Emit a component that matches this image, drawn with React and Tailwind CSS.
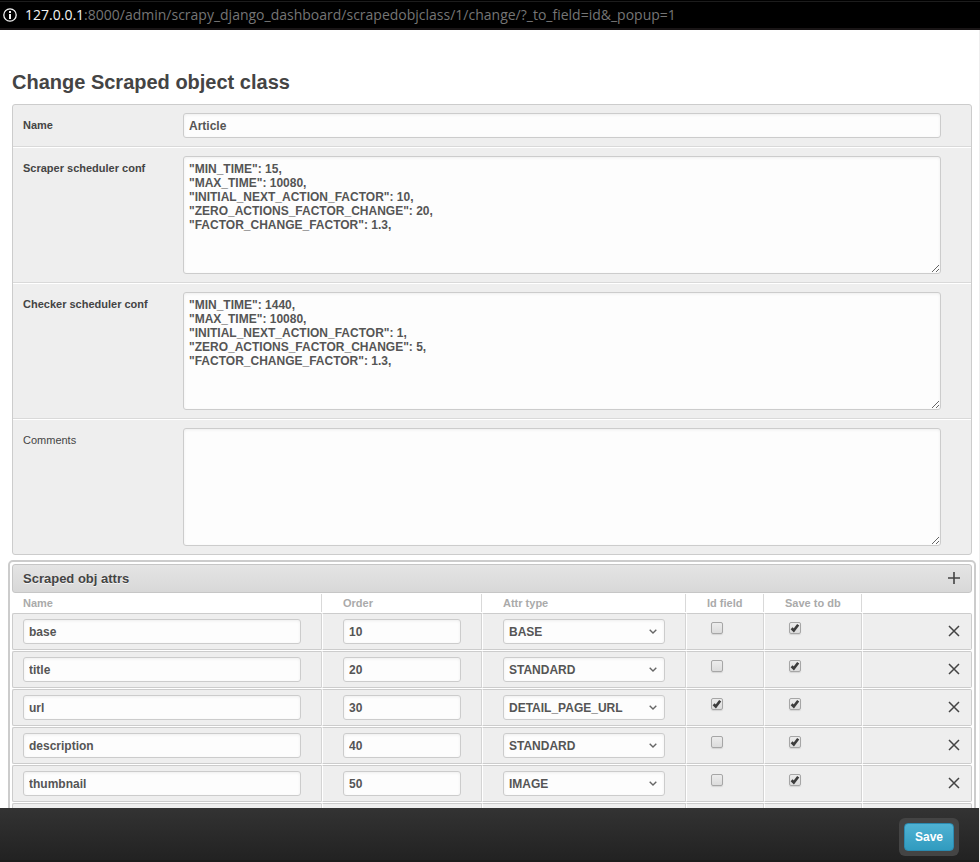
import React from 'react'

const schedulerFields = [
  {
    id: 'scraper-conf',
    label: 'Scraper scheduler conf',
    value:
      '"MIN_TIME": 15,\n"MAX_TIME": 10080,\n"INITIAL_NEXT_ACTION_FACTOR": 10,\n"ZERO_ACTIONS_FACTOR_CHANGE": 20,\n"FACTOR_CHANGE_FACTOR": 1.3,',
    required: true,
  },
  {
    id: 'checker-conf',
    label: 'Checker scheduler conf',
    value:
      '"MIN_TIME": 1440,\n"MAX_TIME": 10080,\n"INITIAL_NEXT_ACTION_FACTOR": 1,\n"ZERO_ACTIONS_FACTOR_CHANGE": 5,\n"FACTOR_CHANGE_FACTOR": 1.3,',
    required: true,
  },
  { id: 'comments', label: 'Comments', value: '', required: false },
]

const attrs = [
  { name: 'base', order: '10', type: 'BASE', idField: false, save: true },
  { name: 'title', order: '20', type: 'STANDARD', idField: false, save: true },
  { name: 'url', order: '30', type: 'DETAIL_PAGE_URL', idField: true, save: true },
  { name: 'description', order: '40', type: 'STANDARD', idField: false, save: true },
  { name: 'thumbnail', order: '50', type: 'IMAGE', idField: false, save: true },
  { name: '', order: '', type: '', idField: false, save: false },
]

const control =
  'block w-full rounded-[3px] border border-[#ccc] bg-[#fdfdfd] px-[5px] text-xs font-bold text-[#555] shadow-[inset_0_1px_3px_#eee] outline-none focus:border-[#999]'

const cell = 'border-y border-y-[#ccc] border-r border-r-[#d4d4d4] border-l border-l-white bg-[#eee] px-5 py-[5px] align-top'

function Check({ label, checked }) {
  return (
    <span className="relative ml-1 mt-[3px] block size-3">
      <input
        type="checkbox"
        aria-label={label}
        defaultChecked={checked}
        className="peer block size-3 appearance-none rounded-[2px] border border-[#a6a6a6] bg-linear-to-b from-[#ececec] to-[#dcdcdc] shadow-[0_1px_1px_#d4d4d4]"
      />
      <svg
        viewBox="0 0 12 12"
        className="pointer-events-none absolute inset-0 hidden size-3 peer-checked:block"
        aria-hidden="true"
      >
        <path d="M2.6 6.2 4.8 8.5 9.2 2.8" fill="none" stroke="#3c3c3c" strokeWidth="2.7" />
      </svg>
    </span>
  )
}

function AttrRow({ attr }) {
  return (
    <tr>
      <td className="rounded-l-[2px] border-y border-r border-l border-y-[#ccc] border-r-[#d4d4d4] border-l-[#ccc] bg-[#eee] py-[5px] pr-5 pl-[10px] align-top">
        <input type="text" aria-label="Name" defaultValue={attr.name} className={`${control} h-[25px]`} />
      </td>
      <td className={cell}>
        <input type="text" aria-label="Order" defaultValue={attr.order} className={`${control} h-[25px]`} />
      </td>
      <td className={cell}>
        <div className="relative">
          <select
            aria-label="Attr type"
            defaultValue={attr.type}
            className={`${control} h-[25px] appearance-none`}
          >
            <option>{attr.type}</option>
          </select>
          <svg
            viewBox="0 0 8 5"
            className="pointer-events-none absolute top-[10px] right-2 h-[5px] w-2"
            aria-hidden="true"
          >
            <path d="M.7.7 4 3.9 7.3.7" fill="none" stroke="#666" strokeWidth="1.4" />
          </svg>
        </div>
      </td>
      <td className={cell}>
        <Check label="Id field" checked={attr.idField} />
      </td>
      <td className={cell}>
        <Check label="Save to db" checked={attr.save} />
      </td>
      <td className="rounded-r-[2px] border-y border-r border-l border-y-[#ccc] border-r-[#ccc] border-l-white bg-[#eee] pr-[11px] align-middle">
        <button type="button" aria-label="Remove attribute" className="mb-px ml-auto block size-3">
          <svg viewBox="0 0 12 12" className="size-3" aria-hidden="true">
            <path d="M1 1 11 11M11 1 1 11" fill="none" stroke="#444" strokeWidth="1.5" />
          </svg>
        </button>
      </td>
    </tr>
  )
}

export default function App() {
  return (
    <div className="flex h-screen flex-col bg-white font-['Liberation_Sans',Arial,sans-serif] text-[#444]">
      <div className="flex h-[30px] shrink-0 items-center border-t border-b-2 border-t-black border-b-[#191516] bg-black pl-[3px] font-['Open_Sans',sans-serif] text-sm text-[#757575] shadow-[inset_0_1px_0_#1c1c1c]">
        <svg viewBox="0 0 14 14" className="size-[14px] shrink-0" aria-hidden="true">
          <circle cx="7" cy="7" r="6.2" fill="none" stroke="#f4f4f4" strokeWidth="1.3" />
          <path d="M7 3v2M7 6v5" stroke="#f4f4f4" strokeWidth="2" />
        </svg>
        <span className="ml-2 whitespace-nowrap">
          <span className="text-[#f4f4f4]">127.0.0.1</span>
          :8000/admin/scrapy_django_dashboard/scrapedobjclass/1/change/?_to_field=id&amp;_popup=1
        </span>
      </div>

      <form className="flex min-h-0 flex-1 flex-col border-r border-[#eee]" onSubmit={(e) => e.preventDefault()}>
        <main className="min-h-0 flex-1 overflow-y-auto pt-10 pr-[3px] pl-2 [scrollbar-width:none]">
          <h1 className="mb-[10px] ml-1 text-xl leading-6 font-bold">Change Scraped object class</h1>

          <div className="mr-1 ml-1 rounded-[3px] border border-[#ccc] bg-[#eee]">
            <div className="flex border-b border-[#d9d9d9] py-2 pr-[30px] pl-[10px]">
              <label htmlFor="name" className="w-40 shrink-0 pt-[5px] text-[11px] leading-[14px] font-bold">
                Name
              </label>
              <input id="name" type="text" defaultValue="Article" className={`${control} h-[25px]`} />
            </div>
            {schedulerFields.map((f) => (
              <div
                key={f.id}
                className="flex border-t border-b border-t-white border-b-[#d9d9d9] py-2 pr-[30px] pl-[10px] last:border-b-0"
              >
                <label
                  htmlFor={f.id}
                  className={`w-40 shrink-0 pt-[5px] text-[11px] leading-[14px] ${f.required ? 'font-bold' : ''}`}
                >
                  {f.label}
                </label>
                <textarea
                  id={f.id}
                  defaultValue={f.value}
                  className={`${control} h-[118px] resize-y py-[5px] leading-[14px]`}
                />
              </div>
            ))}
          </div>

          <section className="mt-[5px] rounded-[5px] border-2 border-[#ccc] p-[2px]">
            <div className="flex h-[29px] items-center justify-between rounded-[3px] border border-[#c6c6c6] bg-linear-to-b from-[#e4e4e4] to-[#d8d8d8] pr-[11px] pl-[10px]">
              <h2 className="text-[13px] font-bold [text-shadow:0_1px_0_#f4f4f4]">Scraped obj attrs</h2>
              <button type="button" aria-label="Add attribute" className="mb-px size-3">
                <svg viewBox="0 0 12 12" className="size-3" aria-hidden="true">
                  <path d="M6 0v12M0 6h12" fill="none" stroke="#444" strokeWidth="1.6" />
                </svg>
              </button>
            </div>
            <table className="w-full table-fixed border-separate border-spacing-x-0 border-spacing-y-px">
              <thead>
                <tr className="h-[18px] text-left text-[11px] leading-[18px] text-[#aaa]">
                  <th className="border-r border-[#d9d9d9] py-0 pl-[11px]">Name</th>
                  <th className="w-[160px] border-r border-[#d9d9d9] py-0 pl-[21px]">Order</th>
                  <th className="w-[204px] border-r border-[#d9d9d9] py-0 pl-[21px]">Attr type</th>
                  <th className="w-[78px] border-r border-[#d9d9d9] py-0 pl-[21px]">Id field</th>
                  <th className="w-[98px] border-r border-[#d9d9d9] py-0 pl-[21px]">Save to db</th>
                  <td className="w-[110px] p-0" />
                </tr>
              </thead>
              <tbody>
                {attrs.map((a, i) => (
                  <AttrRow key={i} attr={a} />
                ))}
              </tbody>
            </table>
          </section>
        </main>

        <footer className="flex h-[54px] shrink-0 items-center justify-end border-b-2 border-[#1c1c1c] bg-linear-to-b from-[#333] to-[#222] pt-1.5 pr-5">
          <div className="rounded-[6px] bg-[#444] p-[5px]">
            <button
              type="submit"
              className="block h-7 w-[50px] rounded-[4px] border border-[#2b8ab0] bg-linear-to-b from-[#4fb2d3] to-[#309bbf] text-xs font-bold text-white"
            >
              Save
            </button>
          </div>
        </footer>
      </form>
    </div>
  )
}
